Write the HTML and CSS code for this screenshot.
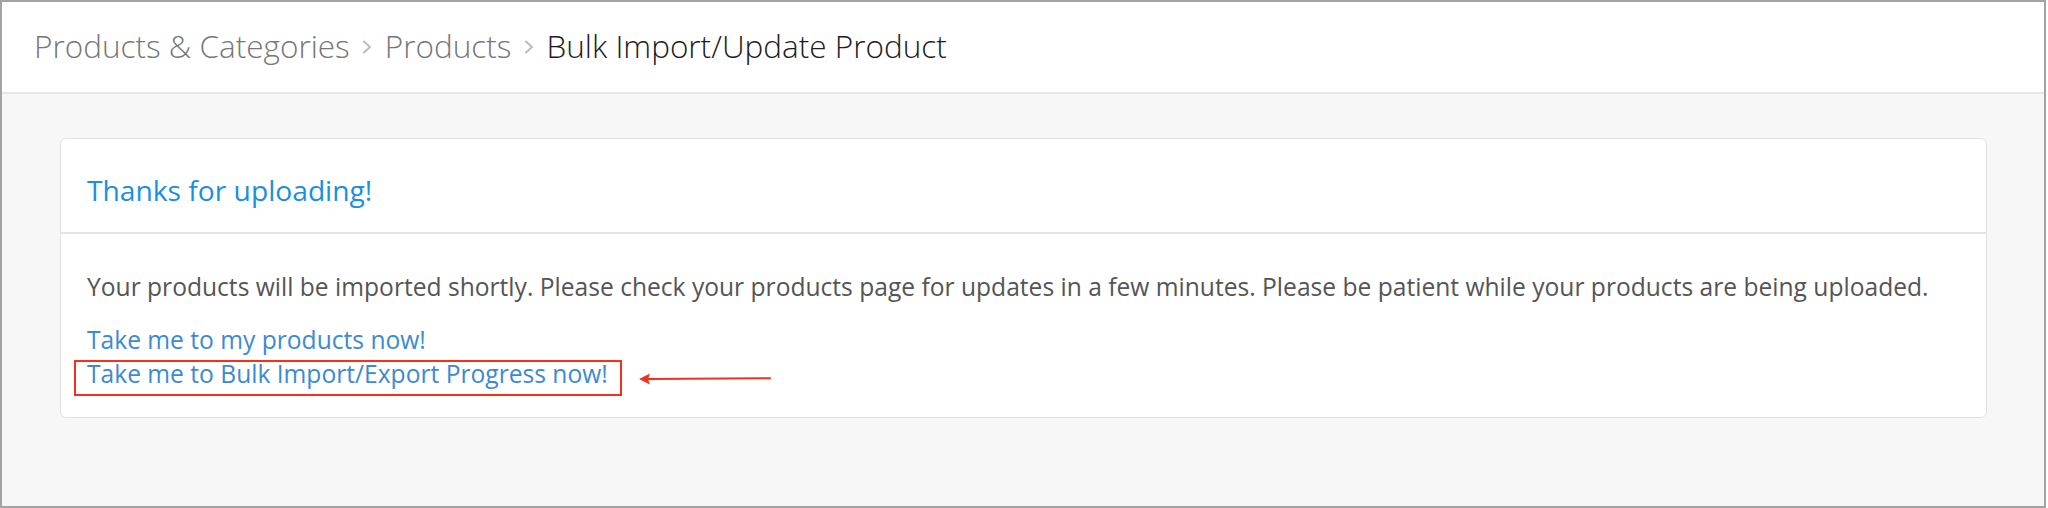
FILE: index.html
```html
<!DOCTYPE html>
<html>
<head>
<meta charset="utf-8">
<link rel="stylesheet" href="styles.css">
</head>
<body>
<div class="frame">
  <header class="topbar">
    <nav class="crumbs">
      <span class="crumb">Products &amp; Categories</span>
      <svg class="sep" width="10" height="14" viewBox="0 0 10 14"><path d="M2 1.5 L8 7 L2 12.5" fill="none" stroke="#b3bdcd" stroke-width="2" stroke-linecap="round" stroke-linejoin="round"/></svg>
      <span class="crumb">Products</span>
      <svg class="sep" width="10" height="14" viewBox="0 0 10 14"><path d="M2 1.5 L8 7 L2 12.5" fill="none" stroke="#b3bdcd" stroke-width="2" stroke-linecap="round" stroke-linejoin="round"/></svg>
      <span class="crumb current">Bulk Import/Update Product</span>
    </nav>
  </header>
  <main class="content">
    <section class="card">
      <div class="card-head">
        <h2 class="card-title">Thanks for uploading!</h2>
      </div>
      <div class="card-body">
        <p class="msg">Your products will be imported shortly. Please check your products page for updates in a few minutes. Please be patient while your products are being uploaded.</p>
        <div class="link-row"><a class="link" href="#">Take me to my products now!</a></div>
        <div class="link-row"><span class="annot"><a class="link" href="#">Take me to Bulk Import/Export Progress now!</a><svg class="arrow" width="134" height="14" viewBox="0 0 134 14"><path d="M1 7 L12 1.5 L10 7 L12 12.5 Z" fill="#f2301c"/><line x1="9" y1="7" x2="132" y2="6.3" stroke="#f2301c" stroke-width="2" stroke-linecap="round"/></svg></span></div>
      </div>
    </section>
  </main>
</div>
</body>
</html>
```

FILE: styles.css
```css
html, body {
  margin: 0;
  padding: 0;
  background: #ffffff;
}

.frame {
  box-sizing: border-box;
  width: 2046px;
  height: 508px;
  border: 2px solid #a3a3a3;
  background: #f7f7f7;
  display: flex;
  flex-direction: column;
  font-family: "Open Sans", "Noto Sans", sans-serif;
}

.topbar {
  box-sizing: border-box;
  height: 92px;
  background: #ffffff;
  border-bottom: 2px solid #e6e6e6;
  padding: 21px 0 0 32px;
}

.crumbs {
  display: flex;
  align-items: center;
  gap: 12.5px;
  height: 45px;
}

.crumb {
  font-size: 31.5px;
  font-weight: 300;
  line-height: 45px;
  color: #777777;
  white-space: nowrap;
}

.crumb.current {
  color: #1c1c1c;
}

.sep {
  display: block;
  margin-top: 2px;
}

.content {
  flex: 1;
  padding: 44px 57px 0 58px;
}

.card {
  background: #ffffff;
  border: 1px solid #e2e2e2;
  border-radius: 6px;
}

.card-head {
  padding: 31px 26px 22px;
  border-bottom: 2px solid #e4e4e4;
}

.card-title {
  margin: 0;
  font-size: 28.2px;
  font-weight: 400;
  line-height: 40px;
  color: #1a8fde;
}

.card-body {
  padding: 36px 26px 26px;
}

.msg {
  margin: 0 0 19px;
  font-size: 24.6px;
  line-height: 34px;
  color: #555555;
}

.link-row {
  font-size: 24.6px;
  line-height: 34px;
}

.link {
  color: #3d8ad0;
  text-decoration: none;
}

.annot {
  position: relative;
  display: inline-block;
}

.annot::before {
  content: "";
  position: absolute;
  left: -13px;
  right: -14px;
  top: 3px;
  bottom: -5px;
  border: 2px solid #f5311c;
}

.arrow {
  position: absolute;
  left: calc(100% + 30px);
  top: 15px;
}
```
